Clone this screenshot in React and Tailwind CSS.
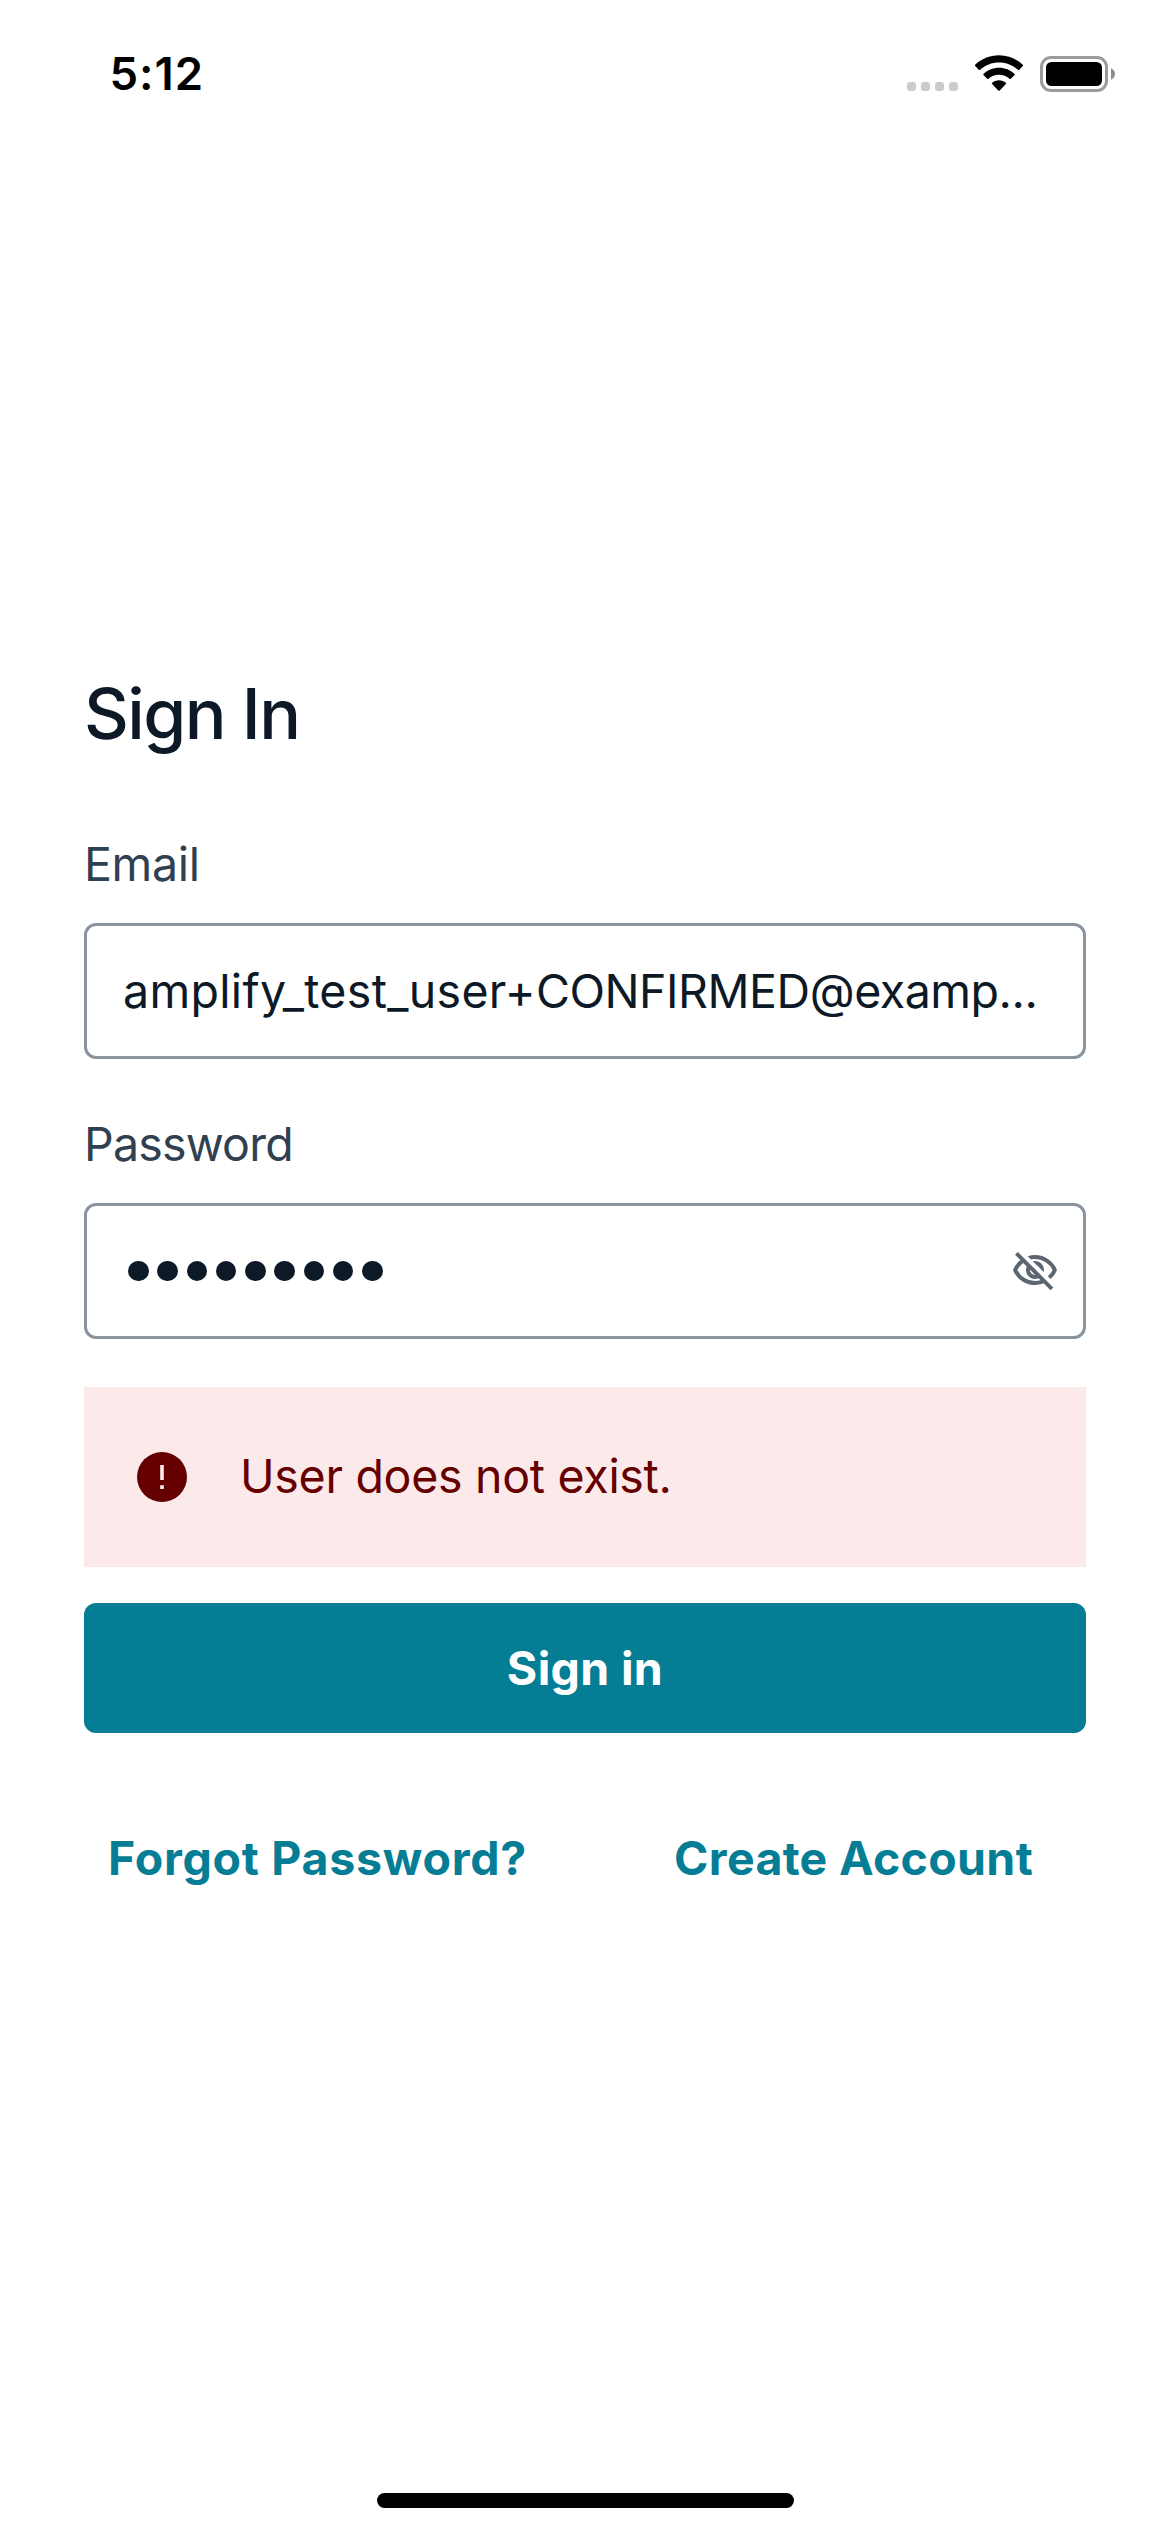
import React from "react";
import { MdOutlineVisibilityOff } from "react-icons/md";

function StatusIcons() {
  return (
    <svg width="210" height="40" viewBox="906 54 210 40" className="mt-[54px] block">
      <g fill="#cbcbcb">
        <rect x="907" y="82" width="9" height="9" rx="3" />
        <rect x="921" y="82" width="9" height="9" rx="3" />
        <rect x="935" y="82" width="9" height="9" rx="3" />
        <rect x="949" y="82" width="9" height="9" rx="3" />
      </g>
      <g transform="translate(975 55)">
        <path d="M24 0.3C33.300 0.3 41.600 3.900 47.800 9.700C48.200 10.100 48.200 10.700 47.800 11.100L44.300 14.700C43.900 15.100 43.300 15.100 42.900 14.700C37.900 10.100 31.300 7.400 24 7.400C16.700 7.400 10.100 10.100 5.100 14.700C4.700 15.100 4.100 15.100 3.700 14.700L0.200 11.100C-0.200 10.700 -0.200 10.100 0.200 9.700C6.400 3.900 14.700 0.300 24 0.300Z" />
        <path d="M24 12.800C30 12.800 35.400 15.100 39.400 18.800C39.800 19.200 39.800 19.800 39.400 20.200L35.800 23.800C35.400 24.200 34.900 24.200 34.500 23.800C31.700 21.300 28 19.800 24 19.800C20 19.800 16.300 21.300 13.500 23.800C13.100 24.200 12.600 24.200 12.200 23.800L8.600 20.200C8.200 19.800 8.200 19.200 8.600 18.800C12.600 15.100 18 12.800 24 12.800Z" />
        <path d="M24 25.200C26.600 25.200 29 26.100 30.800 27.700C31.300 28.100 31.300 28.700 30.900 29.100L24.700 35.400C24.300 35.800 23.700 35.800 23.300 35.400L17.100 29.100C16.700 28.700 16.700 28.100 17.200 27.700C19 26.100 21.400 25.200 24 25.200Z" />
      </g>
      <rect x="1041.500" y="57.500" width="65" height="33" rx="9.500" fill="none" stroke="#9b9b9b" strokeWidth="3" />
      <rect x="1046" y="62" width="56" height="24" rx="5.500" />
      <path d="M1111 68.300C1113.400 69.200 1115 71.400 1115 74C1115 76.600 1113.400 78.800 1111 79.700Z" fill="#8c8c8c" />
    </svg>
  );
}

function ErrorIcon() {
  return (
    <svg width="50" height="50" viewBox="0 0 50 50" className="block shrink-0">
      <circle cx="25" cy="25" r="25" fill="#660000" />
      <rect x="23.200" y="13" width="3.600" height="15" fill="#fce9e9" />
      <rect x="23.200" y="33.200" width="3.600" height="3.800" fill="#fce9e9" />
    </svg>
  );
}

const fieldBox =
  "flex h-[136px] items-center rounded-[12px] border-[3px] border-[#89949f] pl-[36px] text-[#0d1926]";

export default function App() {
  return (
    <div className="flex h-[2532px] w-[1170px] flex-col overflow-hidden bg-white font-['Inter',sans-serif] text-[46.5px] leading-[60px]">
      <header className="flex h-[141px] shrink-0 items-start justify-between pl-[109.5px] pr-[54px]">
        <div className="mt-[46px] text-[45.5px] font-semibold leading-[56px] tracking-[1px] text-black">
          5:12
        </div>
        <StatusIcons />
      </header>

      <main className="flex flex-col px-[84px] pt-[531px]">
        <h1 className="text-[69.5px] font-medium leading-[84px] tracking-[-1.6px] text-[#0d1926]">
          Sign In
        </h1>

        <label className="mt-[78px] tracking-[-0.35px] text-[#304050]">Email</label>
        <div className={`${fieldBox} mt-[29px]`}>
          <div className="whitespace-nowrap tracking-[-0.46px]">
            <span className="tracking-[0.32px]">amplify_test_user+</span>CONFIRMED@examp...
          </div>
        </div>

        <label className="mt-[55px] tracking-[-0.8px] text-[#304050]">Password</label>
        <div className={`${fieldBox} mt-[29px] justify-between pr-[24px]`}>
          <div className="ml-[5px] flex gap-[8.75px]">
            {Array.from({ length: 9 }, (_, i) => (
              <span key={i} className="size-[20.5px] rounded-full bg-[#0d1926]" />
            ))}
          </div>
          <MdOutlineVisibilityOff size={48} className="text-[#5c6670]" />
        </div>

        <div className="mt-[48px] flex h-[180px] items-center gap-[53px] bg-[#fce9e9] pl-[53px] text-[#660000]">
          <ErrorIcon />
          <span className="pb-[2px] tracking-[-0.29px]">User does not exist.</span>
        </div>

        <button className="mt-[36px] h-[130px] rounded-[12px] bg-[#047d95] font-bold tracking-[0.33px] text-white">
          Sign in
        </button>

        <div className="mt-[95px] flex justify-between pl-[24px] pr-[53px] font-bold text-[#047d95]">
          <button className="tracking-[0.73px]">Forgot Password?</button>
          <button className="tracking-[0.32px]">Create Account</button>
        </div>
      </main>

      <div className="mx-auto mb-[24px] mt-auto h-[15px] w-[417px] shrink-0 rounded-full bg-black" />
    </div>
  );
}
